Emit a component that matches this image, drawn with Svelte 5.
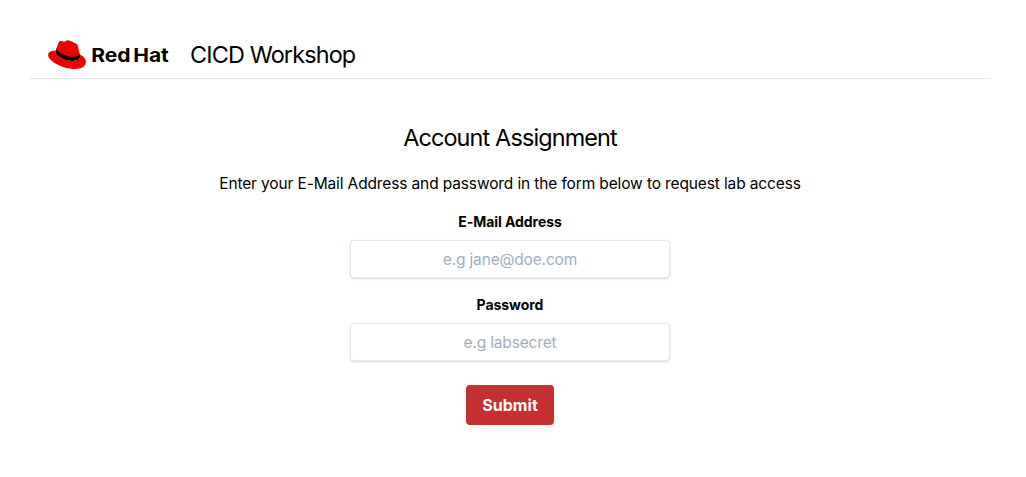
<script>
  let email = $state('');
  let password = $state('');
</script>

<div class="page">
  <header>
    <div class="logo" role="img" aria-label="Red Hat">
      <svg class="hat" viewBox="0 2.7 24 18.4" aria-hidden="true">
        <path fill="#000" d="M20.11 11.951c.218 1.032.218 1.14.218 1.277 0 1.765-1.984 2.745-4.593 2.745-5.895.004-11.06-3.451-11.06-5.734a2.326 2.326 0 0 1 .19-.925L5.4 8l14.43 2.75z" />
        <path fill="#e00" d="M16.009 13.386c1.577 0 3.86-.326 3.86-2.202a1.765 1.765 0 0 0-.04-.431l-.94-4.08c-.216-.898-.406-1.305-1.982-2.093-1.223-.625-3.888-1.658-4.676-1.658-.733 0-.947.946-1.822.946-.842 0-1.467-.706-2.255-.706-.757 0-1.25.515-1.63 1.576 0 0-1.06 2.99-1.197 3.424a.81.81 0 0 0-.028.245c0 1.162 4.577 4.974 10.71 4.974m4.101-1.435c.218 1.032.218 1.14.218 1.277 0 1.765-1.984 2.745-4.593 2.745-5.895.004-11.06-3.451-11.06-5.734a2.326 2.326 0 0 1 .19-.925C2.746 9.415 0 9.794 0 12.217c0 3.969 9.405 8.861 16.851 8.861 5.71 0 7.149-2.582 7.149-4.62 0-1.605-1.387-3.425-3.887-4.512" />
      </svg>
      <svg class="wordmark" viewBox="0 0 80 30" aria-hidden="true">
        <text x="0.2" y="21.8" textLength="39.5" lengthAdjust="spacingAndGlyphs">Red</text>
        <text x="42.2" y="21.8" textLength="35.6" lengthAdjust="spacingAndGlyphs">Hat</text>
      </svg>
    </div>
    <span class="title">CICD Workshop</span>
  </header>

  <main>
    <h1>Account Assignment</h1>
    <p>Enter your E-Mail Address and password in the form below to request lab access</p>
    <form onsubmit={(e) => e.preventDefault()}>
      <label for="email">E-Mail Address</label>
      <input id="email" type="text" placeholder="e.g jane@doe.com" bind:value={email} />
      <label for="password">Password</label>
      <input id="password" type="password" placeholder="e.g labsecret" bind:value={password} />
      <button type="submit">Submit</button>
    </form>
  </main>
</div>

<style>
  :global(body) {
    background: #fff;
    overflow: hidden;
  }
  .page {
    box-sizing: border-box;
    width: 960px;
    margin-left: 30px;
    padding-top: 31px;
    font-family: Inter, "Liberation Sans", sans-serif;
    color: #000;
  }
  header {
    display: flex;
    align-items: center;
    box-sizing: border-box;
    height: 48px;
    padding-left: 18px;
    border-bottom: 1px solid #e2e8f0;
  }
  .logo {
    display: flex;
    align-items: center;
    width: 142px;
  }
  .hat {
    width: 38px;
    height: 29px;
    flex: none;
  }
  .wordmark {
    width: 80px;
    height: 30px;
    margin-left: 5px;
    flex: none;
    overflow: visible;
  }
  .wordmark text {
    font-family: Inter, sans-serif;
    font-size: 19px;
    font-weight: 700;
  }
  .title {
    font-size: 23.4px;
    line-height: 36px;
    letter-spacing: -0.85px;
    white-space: nowrap;
  }
  main {
    display: flex;
    flex-direction: column;
    align-items: center;
    padding-top: 41px;
  }
  h1 {
    margin: 0;
    font-size: 23.4px;
    font-weight: 400;
    line-height: 36px;
    letter-spacing: -0.85px;
  }
  p {
    margin: 16px 0 0;
    font-size: 15.5px;
    line-height: 24px;
    letter-spacing: -0.13px;
    white-space: nowrap;
  }
  form {
    display: flex;
    flex-direction: column;
    align-items: center;
    width: 320px;
    padding-top: 15px;
  }
  label {
    font-size: 14px;
    font-weight: 700;
    line-height: 21px;
    letter-spacing: -0.05px;
    margin-bottom: 8px;
  }
  input {
    box-sizing: border-box;
    width: 320px;
    height: 38px;
    margin: 0 0 16px;
    padding: 8px 12px;
    border: 1px solid #e2e8f0;
    border-radius: 4px;
    background: #fff;
    box-shadow: 0 1px 3px rgba(0, 0, 0, 0.1), 0 1px 2px rgba(0, 0, 0, 0.06);
    font: 15.5px/20px Inter, "Liberation Sans", sans-serif;
    letter-spacing: -0.17px;
    text-align: center;
    color: #4a5568;
    outline: none;
  }
  input::placeholder {
    color: #a0aec0;
    opacity: 1;
  }
  button {
    width: 88px;
    height: 40px;
    margin: 8px 0 0;
    padding: 0;
    border: 0;
    border-radius: 4px;
    background: #c53030;
    color: #fff;
    font: 700 16px/24px Inter, "Liberation Sans", sans-serif;
    letter-spacing: 0.05px;
  }
</style>
